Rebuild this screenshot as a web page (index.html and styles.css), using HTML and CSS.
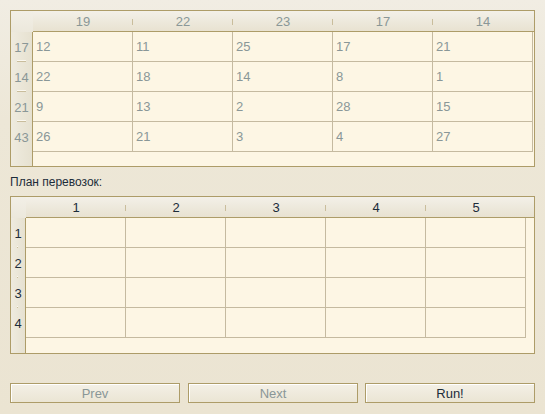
FILE: index.html
```html
<!DOCTYPE html>
<html>
<head>
<meta charset="utf-8">
<link rel="stylesheet" href="styles.css">
</head>
<body>
<div class="frame top">
  <div class="grid g-top">
    <div class="corner"></div>
    <div class="hcell">19</div><div class="hcell">22</div><div class="hcell">23</div><div class="hcell">17</div><div class="hcell last">14</div>
    <div class="hfill"></div>

    <div class="rh">17</div>
    <div class="cell">12</div><div class="cell">11</div><div class="cell">25</div><div class="cell">17</div><div class="cell">21</div><div class="fill"></div>
    <div class="rh">14</div>
    <div class="cell">22</div><div class="cell">18</div><div class="cell">14</div><div class="cell">8</div><div class="cell">1</div><div class="fill"></div>
    <div class="rh">21</div>
    <div class="cell">9</div><div class="cell">13</div><div class="cell">2</div><div class="cell">28</div><div class="cell">15</div><div class="fill"></div>
    <div class="rh last">43</div>
    <div class="cell">26</div><div class="cell">21</div><div class="cell">3</div><div class="cell">4</div><div class="cell">27</div><div class="fill"></div>

    <div class="rh last"></div>
    <div class="tail"></div>
  </div>
</div>

<div class="label">План перевозок:</div>

<div class="frame bottom">
  <div class="grid g-bot">
    <div class="corner"></div>
    <div class="hcell">1</div><div class="hcell">2</div><div class="hcell">3</div><div class="hcell">4</div><div class="hcell last">5</div>
    <div class="hfill"></div>

    <div class="rh">1</div>
    <div class="cell"></div><div class="cell"></div><div class="cell"></div><div class="cell"></div><div class="cell"></div><div class="fill"></div>
    <div class="rh">2</div>
    <div class="cell"></div><div class="cell"></div><div class="cell"></div><div class="cell"></div><div class="cell"></div><div class="fill"></div>
    <div class="rh">3</div>
    <div class="cell"></div><div class="cell"></div><div class="cell"></div><div class="cell"></div><div class="cell"></div><div class="fill"></div>
    <div class="rh last">4</div>
    <div class="cell"></div><div class="cell"></div><div class="cell"></div><div class="cell"></div><div class="cell"></div><div class="fill"></div>

    <div class="rh last"></div>
    <div class="tail"></div>
  </div>
</div>

<div class="buttons">
  <button class="btn disabled">Prev</button>
  <button class="btn disabled">Next</button>
  <button class="btn run">Run!</button>
</div>
</body>
</html>
```

FILE: styles.css
```css
html, body {
  margin: 0;
  padding: 0;
}
body {
  width: 545px;
  height: 414px;
  box-sizing: border-box;
  padding: 10px 10px 0 10px;
  background: linear-gradient(to bottom, #f1ede3 0px, #ede7d7 120px, #ebe4d2 414px);
  font-family: "Liberation Sans", Arial, sans-serif;
  font-size: 13px;
  overflow: hidden;
}
.frame {
  border: 1px solid #ad9c68;
  background: #fdf6e4;
  width: 525px;
  box-sizing: border-box;
}
.grid {
  display: grid;
}
.g-top {
  grid-template-columns: 22px repeat(5, 100px) 1fr;
  grid-template-rows: 21px repeat(4, 30px) 14px;
}
.g-bot {
  grid-template-columns: 15px repeat(5, 100px) 1fr;
  grid-template-rows: 21px repeat(4, 30px) 15px;
}
.corner {
  background: linear-gradient(to bottom, #f2efe6, #ece8dc);
}
.hcell, .hfill {
  position: relative;
  background: linear-gradient(to bottom, #f3f0e8, #e8e2d1);
  border-bottom: 1px solid #ad9c68;
  display: flex;
  align-items: center;
  justify-content: center;
  box-sizing: border-box;
}
.hcell::after {
  content: "";
  position: absolute;
  right: 0;
  top: 8px;
  width: 1px;
  height: 6px;
  background: #c9bd9c;
  box-shadow: 1px 0 0 #fbf8f0;
}
.hcell.last::after {
  display: none;
}
.rh {
  position: relative;
  background: linear-gradient(to right, #efebdf, #e6e1d0);
  border-right: 1px solid #ad9c68;
  display: flex;
  align-items: center;
  justify-content: center;
  box-sizing: border-box;
}
.rh::after {
  content: "";
  position: absolute;
  bottom: 0;
  left: 6px;
  right: 6px;
  height: 1px;
  background: #c9bd9c;
  box-shadow: 0 -1px 0 #fbf8f0;
}
.rh.last::after {
  display: none;
}
.cell {
  border-right: 1px solid #c5baa0;
  border-bottom: 1px solid #c5baa0;
  box-sizing: border-box;
  display: flex;
  align-items: center;
  padding-left: 3px;
}
.tail {
  grid-column: 2 / -1;
}
.top .hcell, .top .rh, .top .cell {
  color: #8a9797;
}
.bottom .hcell, .bottom .rh {
  color: #1c2c3a;
}
.bottom .rh::after {
  left: 6px;
  right: 7px;
}
.label {
  height: 29px;
  display: flex;
  align-items: center;
  color: #1c2c3a;
  font-size: 12px;
  padding-top: 1px;
  box-sizing: border-box;
}
.buttons {
  margin-top: 29px;
  display: flex;
  gap: 8px;
  width: 525px;
}
.btn {
  width: 170px;
  height: 20px;
  border: 1px solid #ad9c68;
  box-shadow: inset 1px 1px 0 #ffffff;
  background: linear-gradient(to bottom, #f4f0e6, #ebe5d4);
  font-family: "Liberation Sans", Arial, sans-serif;
  font-size: 13px;
  color: #1c2c3a;
  padding: 0;
  margin: 0;
}
.btn.run {
  margin-left: -1px;
}
.btn.disabled {
  color: #8a9797;
}
```
